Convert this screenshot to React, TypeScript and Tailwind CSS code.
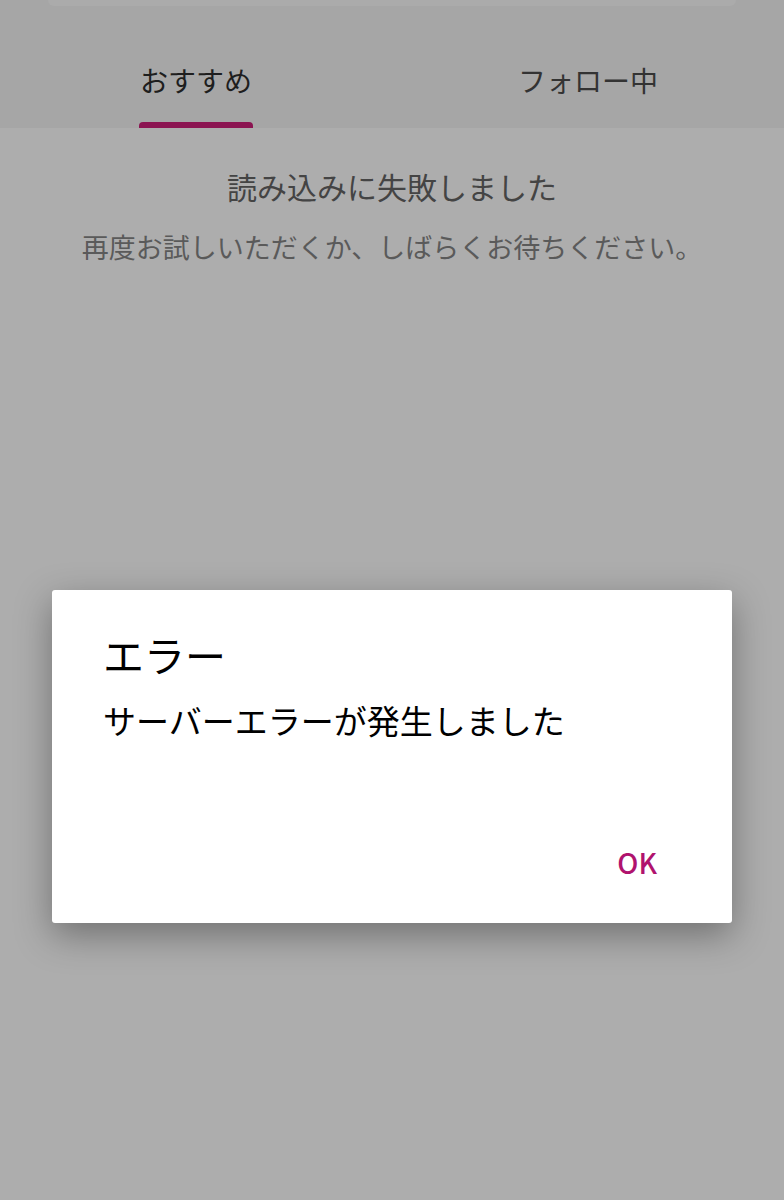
const font = { fontFamily: '"Noto Sans CJK JP", "Noto Sans", sans-serif' };

export default function App() {
  return (
    <div className="relative w-[784px] h-[1200px] bg-[#adadad] overflow-hidden" style={font}>
      {/* header with tabs */}
      <div className="h-[128px] bg-[#a6a6a6] flex flex-col">
        <div className="mx-[48px] h-[6px] rounded-b-[14px] bg-[#ababab]" />
        <div className="flex flex-1">
          <div className="w-1/2 flex flex-col items-center justify-end">
            <span className="text-[28px] leading-none text-[#1e1e1e] mb-[28px]">おすすめ</span>
            <div className="w-[114px] h-[6px] rounded-t-[4px] bg-[#8b1451]" />
          </div>
          <div className="w-1/2 flex flex-col items-center justify-end">
            <span className="text-[28px] leading-none text-[#333333] mb-[34px]">フォロー中</span>
          </div>
        </div>
      </div>

      {/* error message */}
      <div className="flex flex-col items-center pt-[43px]">
        <p className="text-[30px] leading-none text-[#444444]">読み込みに失敗しました</p>
        <p className="mt-[32px] text-[27px] leading-none text-[#5a5a5a]">再度お試しいただくか、しばらくお待ちください。</p>
      </div>

      {/* dialog */}
      <div className="absolute left-[52px] top-[590px] w-[680px] h-[333px] bg-white rounded-[3px] shadow-[0_12px_36px_rgba(0,0,0,0.35)] flex flex-col px-[51px]">
        <h2 className="mt-[44px] text-[41px] leading-none text-black">エラー</h2>
        <p className="mt-[29px] text-[33px] leading-none text-black">サーバーエラーが発生しました</p>
        <div className="mt-auto mb-[47px] flex justify-end pr-[24px]">
          <button className="text-[28px] leading-none font-medium text-[#b0136e]" style={{ fontFamily: '"Noto Sans CJK JP", sans-serif' }}>
            OK
          </button>
        </div>
      </div>
    </div>
  );
}
